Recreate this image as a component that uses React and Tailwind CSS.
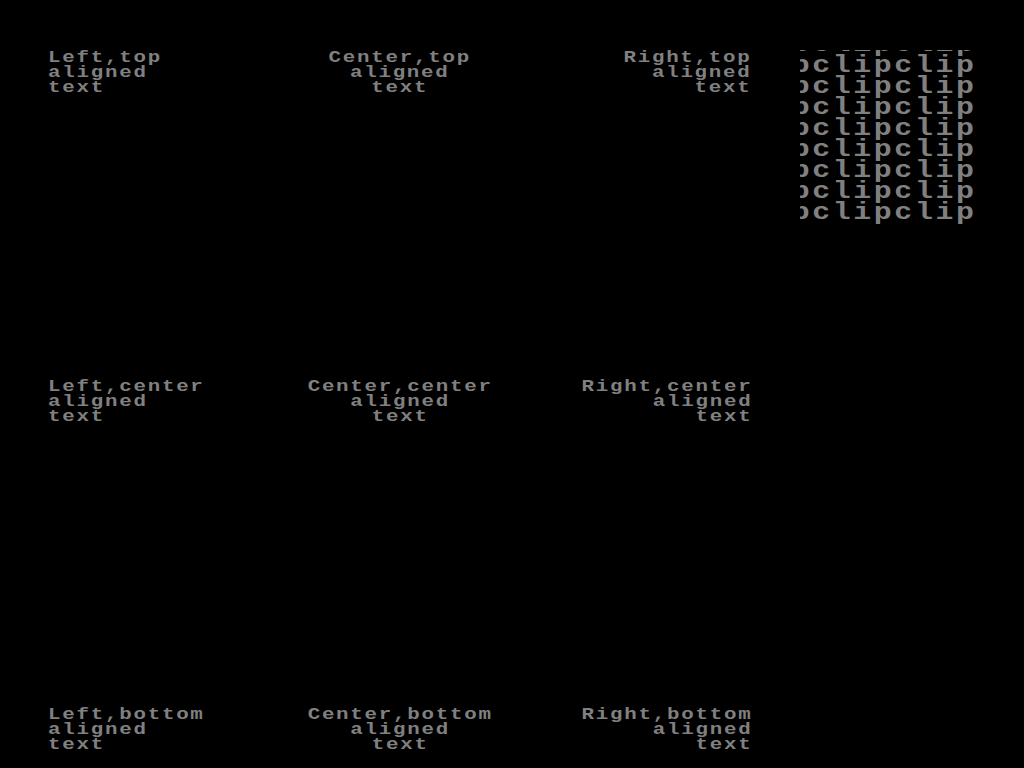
import React from "react";

const cells = [
  { a: "Left,top", row: "self-start", col: "justify-self-start", text: "text-left", origin: "origin-left" },
  { a: "Center,top", row: "self-start", col: "justify-self-center", text: "text-center", origin: "origin-center" },
  { a: "Right,top", row: "self-start", col: "justify-self-end", text: "text-right", origin: "origin-right" },
  { a: "Left,center", row: "self-center", col: "justify-self-start", text: "text-left", origin: "origin-left" },
  { a: "Center,center", row: "self-center", col: "justify-self-center", text: "text-center", origin: "origin-center" },
  { a: "Right,center", row: "self-center", col: "justify-self-end", text: "text-right", origin: "origin-right" },
  { a: "Left,bottom", row: "self-end", col: "justify-self-start", text: "text-left", origin: "origin-left" },
  { a: "Center,bottom", row: "self-end", col: "justify-self-center", text: "text-center", origin: "origin-center" },
  { a: "Right,bottom", row: "self-end", col: "justify-self-end", text: "text-right", origin: "origin-right" },
];

const mono = { fontFamily: '"Liberation Mono", "DejaVu Sans Mono", monospace' };

export default function App() {
  return (
    <div className="w-[1024px] h-[768px] bg-black overflow-hidden flex items-start pt-[48px] pl-[48px] gap-[48px]" style={mono}>
      {/* 3x3 alignment grid */}
      <div className="mt-[3px] w-[704px] h-[702px] grid grid-cols-3 grid-rows-3">
        {cells.map((c) => (
          <div key={c.a} className={`${c.row} ${c.col}`}>
            <div
              className={`${c.text} ${c.origin} scale-x-[1.3] font-bold text-[16px] leading-[15px] tracking-[1.35px] text-[#808080] whitespace-pre`}
            >
              {c.a}
              {"\n"}aligned{"\n"}text
            </div>
          </div>
        ))}
      </div>

      {/* clipped text box */}
      <div className="mt-[2px] w-[176px] h-[180px] overflow-hidden">
        <div className="-ml-[70px] -mt-[15px] origin-left scale-x-[1.3] font-bold text-[23px] leading-[21px] tracking-[2px] text-[#808080] whitespace-nowrap">
          {Array.from({ length: 9 }).map((_, i) => (
            <div key={i}>clipclipclip</div>
          ))}
        </div>
      </div>
    </div>
  );
}
